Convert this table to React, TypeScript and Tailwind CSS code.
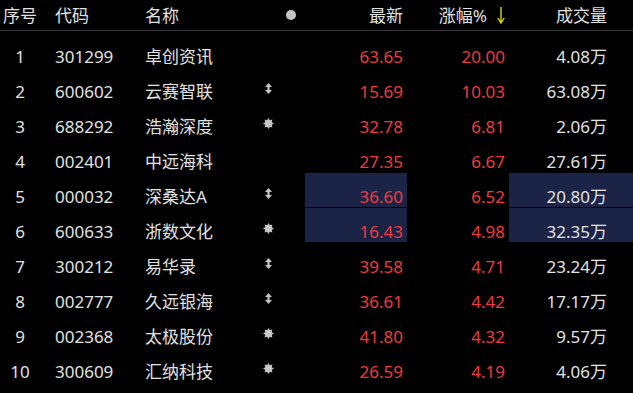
import React from 'react';

type Mark = 'updown' | 'star' | null;

type Row = {
  no: number;
  code: string;
  name: string;
  mark: Mark;
  price: string;
  pct: string;
  vol: string;
  hot?: boolean;
};

const rows: Row[] = [
  { no: 1, code: '301299', name: '卓创资讯', mark: null, price: '63.65', pct: '20.00', vol: '4.08' },
  { no: 2, code: '600602', name: '云赛智联', mark: 'updown', price: '15.69', pct: '10.03', vol: '63.08' },
  { no: 3, code: '688292', name: '浩瀚深度', mark: 'star', price: '32.78', pct: '6.81', vol: '2.06' },
  { no: 4, code: '002401', name: '中远海科', mark: null, price: '27.35', pct: '6.67', vol: '27.61' },
  { no: 5, code: '000032', name: '深桑达A', mark: 'updown', price: '36.60', pct: '6.52', vol: '20.80', hot: true },
  { no: 6, code: '600633', name: '浙数文化', mark: 'star', price: '16.43', pct: '4.98', vol: '32.35', hot: true },
  { no: 7, code: '300212', name: '易华录', mark: 'updown', price: '39.58', pct: '4.71', vol: '23.24' },
  { no: 8, code: '002777', name: '久远银海', mark: 'updown', price: '36.61', pct: '4.42', vol: '17.17' },
  { no: 9, code: '002368', name: '太极股份', mark: 'star', price: '41.80', pct: '4.32', vol: '9.57' },
  { no: 10, code: '300609', name: '汇纳科技', mark: 'star', price: '26.59', pct: '4.19', vol: '4.06' },
];

function UpDown() {
  return (
    <svg width="7" height="11" viewBox="0 0 7 11" className="block">
      <polygon
        points="3.5,0 7,4 4.6,4 4.6,7 7,7 3.5,11 0,7 2.4,7 2.4,4 0,4"
        fill="#c4c4c4"
      />
    </svg>
  );
}

function Star() {
  const pts: string[] = [];
  for (let i = 0; i < 16; i++) {
    const a = (Math.PI / 8) * i - Math.PI / 2;
    const r = i % 2 === 0 ? 5.5 : 3.5;
    pts.push(`${(5.5 + r * Math.cos(a)).toFixed(2)},${(5.5 + r * Math.sin(a)).toFixed(2)}`);
  }
  return (
    <svg width="11" height="11" viewBox="0 0 11 11" className="block">
      <polygon points={pts.join(' ')} fill="#c8c8c8" />
    </svg>
  );
}

function SortArrow() {
  return (
    <svg width="8" height="17" viewBox="0 0 8 17" className="block">
      <line x1="4" y1="0" x2="4" y2="15" stroke="#e8e800" strokeWidth="1.3" />
      <polyline points="0.8,11 4,16 7.2,11" fill="none" stroke="#e8e800" strokeWidth="1.3" />
    </svg>
  );
}

export default function App() {
  return (
    <div
      className="h-[393px] w-[633px] overflow-hidden bg-black text-[17px] text-[#e2e2e2]"
      style={{ fontFamily: '"Noto Sans", "Noto Sans CJK SC", sans-serif' }}
    >
      <div className="flex h-[31px] items-center border-b border-[#353535] leading-none">
        <div className="w-[40px] text-center">序号</div>
        <div className="w-[100px] pl-[15px]">代码</div>
        <div className="w-[110px] pl-[5px]">名称</div>
        <div className="flex w-[55px] pl-[36px]">
          <span className="h-[10px] w-[10px] rounded-full bg-[#c4c4c4]" />
        </div>
        <div className="w-[102px] pr-[4px] text-right">最新</div>
        <div className="flex w-[102px] items-center justify-end gap-[10px] pr-[4px]">
          <span>涨幅%</span>
          <SortArrow />
        </div>
        <div className="w-[124px] pr-[26px] text-right">成交量</div>
      </div>

      <div className="pt-[2px]">
        {rows.map((r) => (
          <div key={r.no} className="flex h-[35px] leading-none">
            <div className="flex w-[40px] items-end justify-center pb-[3px]">{r.no}</div>
            <div className="flex w-[100px] items-end pb-[3px] pl-[15px]">{r.code}</div>
            <div className="flex w-[110px] items-end pb-[3px] pl-[5px]">{r.name}</div>
            <div className="flex w-[55px] items-start pt-[15px]">
              <div className="flex w-[36px] justify-center">
                {r.mark === 'updown' && <UpDown />}
                {r.mark === 'star' && <Star />}
              </div>
            </div>
            <div
              className={`mb-[1px] flex w-[102px] items-end justify-end pb-[2px] pr-[4px] text-[#f03a3f] ${
                r.hot ? 'bg-[#1b2446]' : ''
              }`}
            >
              {r.price}
            </div>
            <div className="mb-[1px] flex w-[102px] items-end justify-end pb-[2px] pr-[4px] text-[#f03a3f]">
              {r.pct}
            </div>
            <div
              className={`mb-[1px] flex w-[124px] items-end justify-end pb-[2px] pr-[26px] ${
                r.hot ? 'bg-[#1b2446]' : ''
              }`}
            >
              {r.vol}万
            </div>
          </div>
        ))}
      </div>
    </div>
  );
}
